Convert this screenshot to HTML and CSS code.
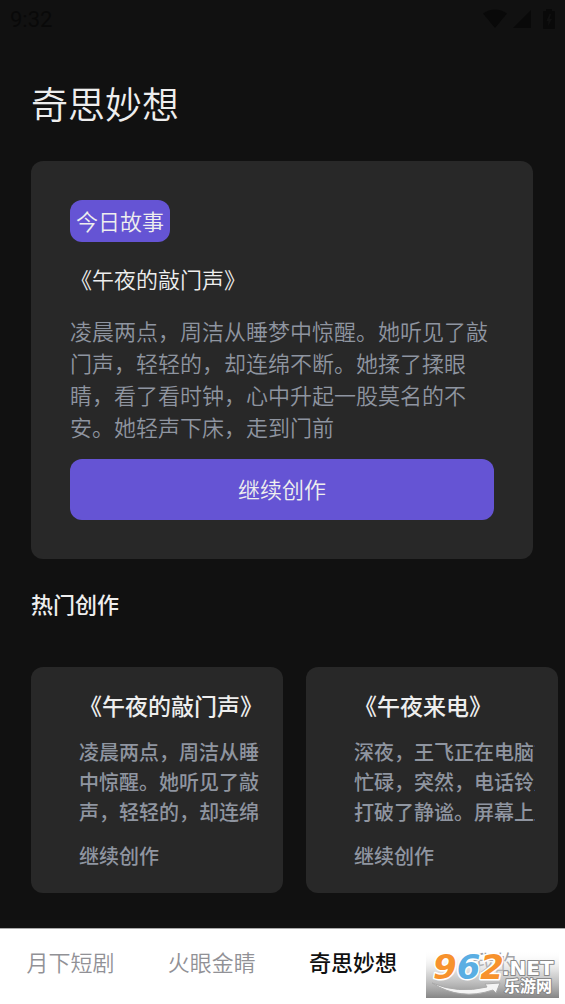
FILE: index.html
```html
<!DOCTYPE html>
<html lang="zh-CN">
<head>
<meta charset="utf-8">
<meta name="viewport" content="width=device-width, initial-scale=1">
<title>奇思妙想</title>
<link rel="stylesheet" href="styles.css">
</head>
<body>
<div class="app">
  <header class="status">
    <span class="clock">9:32</span>
    <span class="status-icons">
      <svg width="24" height="20" viewBox="0 0 24 20"><path d="M0 4.500Q12-3.500 24 4.500L12 19Z"/></svg>
      <svg width="18" height="20" viewBox="0 0 18 20"><path d="M18 1V19H0Z"/></svg>
      <svg width="12" height="20" viewBox="0 0 12 20"><path fill-rule="evenodd" d="M3 0H9V2H11Q12 2 12 3V19Q12 20 11 20H1Q0 20 0 19V3Q0 2 1 2H3ZM6.500 5L3.500 12H5.500L5 17L9 10H6.500L8 5Z"/></svg>
    </span>
  </header>
  <main class="content">
    <h1 class="title">奇思妙想</h1>
    <article class="today">
      <span class="tag">今日故事</span>
      <h2 class="story-name">《午夜的敲门声》</h2>
      <p class="story-text">凌晨两点，周洁从睡梦中惊醒。她听见了敲门声，轻轻的，却连绵不断。她揉了揉眼睛，看了看时钟，心中升起一股莫名的不安。她轻声下床，走到门前</p>
      <button class="primary" type="button">继续创作</button>
    </article>
    <h2 class="section-title">热门创作</h2>
    <div class="cards">
      <article class="card">
        <h3 class="card-name">《午夜的敲门声》</h3>
        <p class="card-text">凌晨两点，周洁从睡梦<br>中惊醒。她听见了敲门<br>声，轻轻的，却连绵不</p>
        <a class="card-link" href="#">继续创作</a>
      </article>
      <article class="card">
        <h3 class="card-name">《午夜来电》</h3>
        <p class="card-text">深夜，王飞正在电脑前<br>忙碌，突然，电话铃声<br>打破了静谧。屏幕上显</p>
        <a class="card-link" href="#">继续创作</a>
      </article>
    </div>
    <h2 class="section-title">热门创作</h2>
  </main>
  <nav class="tabs">
    <a class="tab" href="#">月下短剧</a>
    <a class="tab" href="#">火眼金睛</a>
    <a class="tab active" href="#" aria-current="page">奇思妙想</a>
    <a class="tab" href="#">我的</a>
    <svg class="mark" width="133" height="48" viewBox="0 0 133 48">
      <defs>
        <linearGradient id="shade" x1="0" y1="0" x2="0" y2="1">
          <stop offset="0" stop-color="#fff" stop-opacity="0"/>
          <stop offset="0.500" stop-color="#c4c4c4" stop-opacity="0.700"/>
          <stop offset="1" stop-color="#858585"/>
        </linearGradient>
      </defs>
      <rect width="133" height="48" fill="url(#shade)"/>
      <path class="swoosh" d="M6 33Q32 44 61 37L59 34L74 33L70 43L67 40Q34 51 6 33Z"/>
      <text class="mark-num" x="7" y="29"><tspan fill="#f7922d">9</tspan><tspan fill="#5aaee3">6</tspan><tspan fill="#f7922d">2</tspan></text>
      <text class="mark-net" x="76" y="25">.NET</text>
      <text class="mark-cn" x="78" y="42">乐游网</text>
    </svg>
  </nav>
</div>
</body>
</html>
```
FILE: styles.css
```css
* { box-sizing: border-box; }
body {
  margin: 0;
  background: #111;
  color: #eee;
  font-family: "Noto Sans CJK SC", sans-serif;
  font-size: 22px;
  font-weight: 350;
}
h1, h2, h3, p { margin: 0; }
a { color: inherit; text-decoration: none; }
.app { display: flex; flex-direction: column; height: 100vh; overflow: hidden; }
.status {
  flex: none;
  display: flex;
  justify-content: space-between;
  align-items: center;
  height: 38px;
  padding: 0 10px;
  color: #090909;
}
.clock { font-family: Roboto, sans-serif; font-size: 22px; font-weight: 400; }
.status-icons { display: flex; align-items: center; gap: 6px; fill: #090909; }
.status-icons svg:last-child { margin-left: 6px; }
.content { flex: 1; min-height: 0; overflow: hidden; padding: 37px 0 0 31px; }
.title { font-size: 37px; font-weight: 350; line-height: 56px; margin-bottom: 30px; }
.today {
  margin-right: 32px;
  padding: 39px;
  border-radius: 12px;
  background: #282828;
}
.tag {
  display: block;
  width: fit-content;
  padding: 0 6px 2px;
  border-radius: 12px;
  background: #6554d4;
  line-height: 40px;
}
.story-name { margin-top: 19px; font-size: 22px; font-weight: 350; line-height: 34px; }
.story-text { margin: 19px 0 17px; color: #8f95a0; line-height: 32px; }
.primary {
  display: block;
  width: 100%;
  height: 61px;
  padding: 0 0 4px;
  border: 0;
  border-radius: 12px;
  background: #6554d4;
  color: #eee;
  font: inherit;
}
.section-title { margin-top: 28px; font-size: 22px; font-weight: 500; line-height: 32px; }
.cards { display: flex; gap: 23px; margin-top: 48px; overflow: hidden; }
.card {
  flex: none;
  width: 252px;
  padding: 22px 23px 22px 48px;
  border-radius: 12px;
  background: #282828;
  font-size: 20px;
  font-weight: 500;
  color: #8f95a0;
}
.card-name { color: #eee; font-size: 23px; font-weight: 500; line-height: 32px; white-space: nowrap; }
.card-text { margin: 16px 0 14px; overflow: hidden; line-height: 30px; white-space: nowrap; }
.card-link { display: block; line-height: 30px; }
.tabs {
  position: relative;
  flex: none;
  display: grid;
  grid-template-columns: repeat(4, 1fr);
  height: 76px;
  border-top: 1px solid #aaa;
  background: #fff;
  color: #919196;
}
.tab { text-align: center; line-height: 64px; }
.tab.active { color: #111; font-weight: 500; }
.mark { position: absolute; right: 6px; bottom: 6px; }
.swoosh { fill: #f4f4f4; stroke: #aaa; }
.mark text { paint-order: stroke; stroke: #fff; stroke-width: 3px; stroke-linejoin: round; }
.mark-num { font: italic bold 34px "DejaVu Sans", sans-serif; }
.mark .mark-net { font: bold 20px "DejaVu Sans", sans-serif; fill: #fff; stroke: #888; stroke-width: 2px; }
.mark .mark-cn { font: bold 16px "Noto Sans CJK SC", sans-serif; fill: #fff; stroke: #888; stroke-width: 2px; }
```
